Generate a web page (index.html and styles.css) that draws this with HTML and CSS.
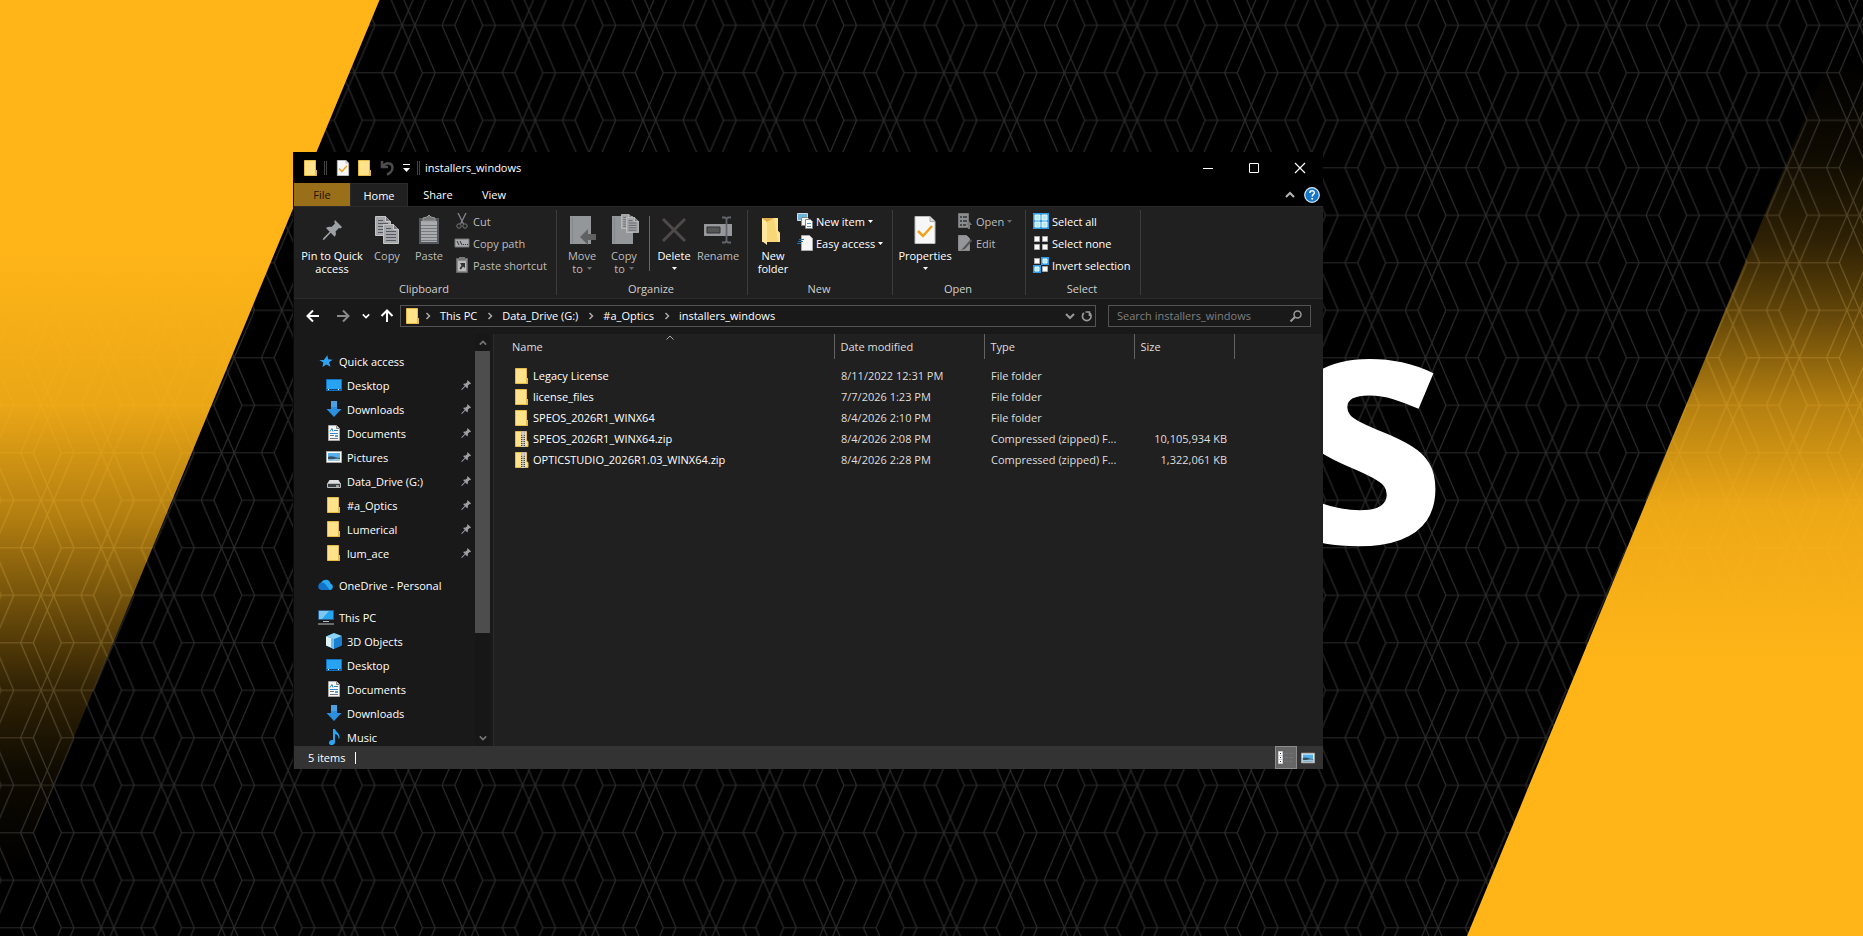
FILE: index.html
```
<!DOCTYPE html>
<html lang="en">
	<head>
		<meta charset="utf-8">
		<title>installers_windows</title>
		<link rel="stylesheet" href="styles.css">
	</head>
	<body>

		<!-- shared icons -->
		<svg class="defs" width="0" height="0" aria-hidden="true">
			<symbol id="folder" viewBox="0 0 16 16">
				<path d="M1.5 .5h11v9l1.5 1v5h-12.500z" fill="#ffe28a"/>
				<path d="M1.500 .5h11v9M1.500 .5v15h12v-5l-1-1v6" fill="none" stroke="#e8bb45"/>
			</symbol>
			<symbol id="zip" viewBox="0 0 16 16">
				<path d="M1.500 .5h11v9l1.500 1v5h-12.500z" fill="#ffe28a" stroke="#e8bb45"/>
				<path d="M7 0h4v16h-4z" fill="#c9c9c9"/>
				<path d="M9 4v12" stroke="#444" stroke-width="4" stroke-dasharray="1 1"/>
				<path d="M9 4v12" stroke="#ddd"/>
				<path d="M8 0h2v5h-2z" fill="#eee" stroke="#777" stroke-width=".5"/>
			</symbol>
			<symbol id="check-doc" viewBox="0 0 22 28">
				<path d="M1 .5h15l5 5v22h-20z" fill="#f7f7f7" stroke="#bbb"/>
				<path d="M16 .5v5h5" fill="#ddd" stroke="#aaa"/>
				<path d="M4 15l5 5 9-10" fill="none" stroke="#eea21b" stroke-width="2.500"/>
			</symbol>
			<symbol id="pin" viewBox="0 0 20 20">
				<path d="M13 0l7 7-1.500 1.500-1.500-.5-3.500 3.500c.8 2.200.3 4-.8 5.300l-4-4-6.200 6.700-1.800.5.500-1.800 6.500-6.500-3.700-3.700c1.500-1 3.500-1.500 5.500-1l3.500-3.500-.7-1.500z" fill="#9da1a6"/>
			</symbol>
			<symbol id="page" viewBox="0 0 16 20">
				<path d="M.5.5h10l5 5v14h-15z" fill="#a5a7aa" stroke="#c4c4c4"/>
				<path d="M10.500.5v5h5" fill="#777" stroke="#ccc"/>
				<path d="M3 4.500h5M3 7.500h10M3 10.500h10M3 13.500h10M3 16.500h10" stroke="#555a62"/>
			</symbol>
			<symbol id="chev-down" viewBox="0 0 10 10"><path d="M1 3l4 4 4-4" fill="none" stroke="currentColor" stroke-width="2"/></symbol>
			<symbol id="chev-up" viewBox="0 0 10 10"><path d="M1 7l4-4 4 4" fill="none" stroke="currentColor" stroke-width="2"/></symbol>
			<symbol id="chev-right" viewBox="0 0 10 10"><path d="M3.500 2l3 3-3 3" fill="none" stroke="currentColor" stroke-width="1.500"/></symbol>
			<symbol id="caret" viewBox="0 0 5 3"><path d="M0 0h5l-2.500 3z" fill="currentColor"/></symbol>
			<symbol id="arrow" viewBox="0 0 14 14"><path d="M13 7h-11M7 1.500l-5.500 5.500 5.500 5.500" fill="none" stroke="currentColor" stroke-width="2"/></symbol>
			<symbol id="desktop" viewBox="0 0 16 16"><path d="M.5 2.500h15v11h-15z" fill="#27a3f2" stroke="#1772bd"/><path d="M1 12.500h1m1 0h9m1 0h2" stroke="#0b4a80"/><path d="M2 12.500h1m9 0h1" stroke="#fff"/></symbol>
			<symbol id="download" viewBox="0 0 16 16"><path d="M5 0h6v8h4.500l-7.500 8-7.500-8h4.500z" fill="#2d8fe0"/><path d="M5 0h6v6h-6z" fill="#4da0e0"/></symbol>
			<symbol id="document" viewBox="0 0 16 16"><path d="M2.500.5h8l3 3v12h-11z" fill="#f7f7f7" stroke="#aaa"/><path d="M10.500.5v3h3" fill="#ccc" stroke="#888"/><path d="M4 6.500l2-3 1 3M8 5.500h4M4 8.500h8" fill="none" stroke="#2b86cf"/><path d="M4 10.500h4M4 13.500h8" stroke="#777"/><path d="M9 10h3v2h-3z" fill="#5c9bc0"/></symbol>
			<symbol id="picture" viewBox="0 0 16 16"><path d="M.5 2.500h15v11h-15z" fill="#fff" stroke="#a8a8a8"/><path d="M2 4h12v8h-12z" fill="#55b0ec"/><path d="M2 8c4-2 7 1 12 1v3h-12z" fill="#345267"/><path d="M2 10c5 1 7-1 12 0v2h-12z" fill="#9fc9de"/></symbol>
			<symbol id="drive" viewBox="0 0 16 16"><path d="M3.500 7h9l2.500 4h-14z" fill="#ddd"/><path d="M1.500 10.500h13v4h-13z" fill="#3a3f44" stroke="#bbb"/><path d="M10 13h3" stroke="#fff"/></symbol>
			<symbol id="star" viewBox="-1 -1 18 18"><path d="M9.500 1.500l1 4.500 5 .5-4 3 1.500 5-4.500-2.700-4.500 3 1-5-4.500-3h5z" fill="#2fa2f5"/></symbol>
			<symbol id="cloud" viewBox="0 0 16 16"><path d="M4 13a4 4 0 0 1-.8-7.500 5 5 0 0 1 9.300 1 3.400 3.400 0 0 1 0 6.500z" fill="#28a8f0"/><path d="M1 12c-1.500-2-1-6 3-6.500 3 0 4 3 8 7.500h-8z" fill="#1272c8"/></symbol>
			<symbol id="pc" viewBox="0 0 16 16"><path d="M.5 1.500h15v9h-15z" fill="#25a4f0" stroke="#2a5b86"/><path d="M1 2h10l-7 8h-3z" fill="#7cc8f2"/><path d="M5 12.500h6M0 15h16" stroke="#b9bdc1"/></symbol>
			<symbol id="cube" viewBox="0 0 16 16"><path d="M0 3.500l7-3 9 3v9l-8 3.500-8-3.500z" fill="#1a7fd0"/><path d="M0 3.500l8-3.500 8 3-8 3z" fill="#8ad4f5"/><path d="M0 3.500l8 2.500v10l-8-3.500z" fill="#dff3f2"/><path d="M5 5l3 1v10l-3-1.500z" fill="#68bff0"/></symbol>
			<symbol id="music" viewBox="0 0 16 16"><path d="M7 0h2c.5 3 5 4 4.500 9-.5 1-1 1-1 1 .5-3-1.500-4.500-3.500-5v8c0 4-6 4-6 1 0-2.500 2-3.500 4-3z" fill="#2aa5f3"/></symbol>
		</svg>

		<!-- wallpaper -->
		<svg class="wallpaper" viewBox="0 0 1863 936" preserveAspectRatio="xMidYMid slice" aria-hidden="true">
			<defs>
				<g id="lines" fill="none" stroke-width="1.200">
					<path d="M0 0l40.700 95M40.700 0l-40.700 95M12.700 0l40.700 95M53.400 0l-40.700 95M40.700 0h92M-80 0h92.700M40.700 95h92M-80 95h92.700"/>
					<path d="M60.200-47.500l40.700 95M100.900-47.500l-40.700 95M72.900-47.500l40.700 95M113.600-47.500l-40.700 95M60.200 47.500l40.700 95M100.900 47.500l-40.700 95M72.900 47.500l40.700 95M113.600 47.500l-40.700 95M-19.500 47.500h92.400M100.900 47.500h30"/>
				</g>
				<pattern id="mesh" x="442" y="25.300" width="120.400" height="95" patternUnits="userSpaceOnUse">
					<use href="#lines" stroke="#2b2b2b"/>
				</pattern>
				<pattern id="meshAmber" x="442" y="25.300" width="120.400" height="95" patternUnits="userSpaceOnUse">
					<use href="#lines" stroke="#e2a016"/>
				</pattern>
				<linearGradient id="fadeRight" gradientUnits="userSpaceOnUse" x1="0" y1="60" x2="0" y2="660">
					<stop offset="0" stop-color="#ffb518" stop-opacity="0"/>
					<stop offset=".16" stop-color="#ffb518" stop-opacity=".06"/>
					<stop offset=".3" stop-color="#ffb518" stop-opacity=".18"/>
					<stop offset=".42" stop-color="#ffb518" stop-opacity=".38"/>
					<stop offset=".57" stop-color="#ffb518" stop-opacity=".7"/>
					<stop offset=".75" stop-color="#ffb518" stop-opacity=".93"/>
					<stop offset="1" stop-color="#ffb518"/>
				</linearGradient>
				<linearGradient id="fadeLeft" gradientUnits="userSpaceOnUse" x1="0" y1="870" x2="0" y2="250">
					<stop offset="0" stop-color="#ffb518" stop-opacity="0"/>
					<stop offset=".16" stop-color="#ffb518" stop-opacity=".06"/>
					<stop offset=".3" stop-color="#ffb518" stop-opacity=".2"/>
					<stop offset=".42" stop-color="#ffb518" stop-opacity=".42"/>
					<stop offset=".57" stop-color="#ffb518" stop-opacity=".7"/>
					<stop offset=".75" stop-color="#ffb518" stop-opacity=".92"/>
					<stop offset="1" stop-color="#ffb518"/>
				</linearGradient>
				<mask id="bands" maskUnits="userSpaceOnUse" x="0" y="0" width="1863" height="936">
					<path d="M0 0h379.500l-388 936z" fill="url(#fadeLeft)"/>
					<path d="M1863-24v960h-396z" fill="url(#fadeRight)"/>
				</mask>
			</defs>
			<rect width="1863" height="936" fill="#000"/>
			<rect width="1863" height="936" fill="url(#mesh)"/>
			<path d="M0 0h379.500l-388 936z" fill="url(#fadeLeft)"/>
			<path d="M1863-24v960h-396z" fill="url(#fadeRight)"/>
			<path d="M0 450h300v486h-300zM1400 0h463v450h-463z" fill="url(#meshAmber)" opacity=".35" mask="url(#bands)"/>
			<text class="logo" x="1448" y="543" text-anchor="end">s</text>
		</svg>

		<div class="screen">
			<main class="window">

				<header class="titlebar">
					<svg class="i16"><use href="#folder"/></svg>
					<span class="grip"></span>
					<button class="quick" aria-label="Properties"><svg class="i16"><use href="#check-doc"/></svg></button>
					<button class="quick" aria-label="New folder"><svg class="i16"><use href="#folder"/></svg></button>
					<button class="quick" aria-label="Undo"><svg class="i16" viewBox="0 0 16 16"><path d="M3 1v6h6M3.500 6.500c4-5 10-3.500 10 1 0 3-2.500 6-5.500 7" fill="none" stroke="#4d4d4d" stroke-width="2.500"/></svg></button>
					<button class="more" aria-label="Customize"><svg width="7" height="8" viewBox="0 0 7 8"><path d="M0 .5h7" stroke="#fff"/><path d="M0 4h7l-3.500 4z" fill="#fff"/></svg></button>
					<span class="grip"></span>
					<h1>installers_windows</h1>
					<div class="controls">
						<button aria-label="Minimize"><svg width="12" height="12"><path d="M1 6.500h10" stroke="#fff"/></svg></button>
						<button aria-label="Maximize"><svg width="12" height="12"><path d="M1.500 1.500h9v9h-9z" fill="none" stroke="#fff"/></svg></button>
						<button aria-label="Close"><svg width="12" height="12"><path d="M1 1l10 10M11 1l-10 10" stroke="#fff" stroke-width="1.200"/></svg></button>
					</div>
				</header>

				<nav class="tabs">
					<button class="file">File</button>
					<button class="active">Home</button>
					<button class="share">Share</button>
					<button class="view">View</button>
					<div class="help">
						<button aria-label="Collapse ribbon"><svg class="i10"><use href="#chev-up"/></svg></button>
						<button aria-label="Help"><svg class="i16" viewBox="0 0 16 16"><circle cx="8" cy="8" r="7.300" fill="#1677c8" stroke="#dceaf5" stroke-width="1.200"/><path d="M5.800 6c0-3 4.600-2.800 4.600-.3 0 1.600-2.200 1.800-2.200 3.800" fill="none" stroke="#fff" stroke-width="1.500"/><circle cx="8.200" cy="11.800" r="1" fill="#fff"/></svg></button>
					</div>
				</nav>

				<section class="ribbon">
					<div class="group clipboard">
						<div class="items">
							<button class="big wide"><svg class="i32" viewBox="0 0 32 32"><use href="#pin" x="6" y="7" width="20" height="20"/></svg>Pin to Quick access</button>
							<button class="big off"><svg class="i32" viewBox="0 0 32 32"><use href="#page" x="4" y="3" width="16" height="20"/><use href="#page" x="12" y="11" width="16" height="20"/></svg>Copy</button>
							<button class="big off"><svg class="i32" viewBox="0 0 32 32"><path d="M6 5h20v26h-20z" fill="#55585c"/><path d="M8 8h16v21h-16z" fill="#a9abae"/><path d="M8 12.500h16M8 15.500h16M8 18.500h16M8 21.500h16M8 24.500h16M8 27.500h16" stroke="#777a7e"/><path d="M10 8v-3l4-1 2-2 2 2 4 1v3z" fill="#777" stroke="#999"/></svg>Paste</button>
							<div class="stack">
								<button class="off"><svg class="i16" viewBox="0 0 16 16"><path d="M4 0l5.500 11M12 0l-5.500 11" stroke="#84878b" stroke-width="1.300"/><circle cx="5" cy="13" r="2.200" fill="none" stroke="#777"/><circle cx="11" cy="13" r="2.200" fill="none" stroke="#777"/></svg>Cut</button>
								<button class="off"><svg class="i16" viewBox="0 0 16 16"><path d="M1 4h14v8h-14z" fill="#a9abae" stroke="#777"/><path d="M3 6l2 4M6 6l2 4M9 9.500h1M11 9.500h1M13 9.500h1" stroke="#333"/></svg>Copy path</button>
								<button class="off"><svg class="i16" viewBox="0 0 16 16"><path d="M2.500 1.500h11v14h-11z" fill="#888b8e" stroke="#666"/><path d="M4 4h8v10h-8z" fill="#bbb"/><path d="M5 0h6v3h-6z" fill="#777"/><path d="M6 6h5v5l-2-1.500-2 3-1.500-1 2-3z" fill="#333"/></svg>Paste shortcut</button>
							</div>
						</div>
						<h2>Clipboard</h2>
					</div>
					<div class="group organize">
						<div class="items">
							<button class="big off"><svg class="i32" viewBox="0 0 32 32"><path d="M4 3h21v28h-21z" fill="#94979a"/><path d="M6.500 4v26" stroke="#84878b"/><path d="M14 24l8-8v5h8v6h-8v5z" fill="#616161"/></svg><span>Move<br>to <svg class="caret"><use href="#caret"/></svg></span></button>
							<button class="big off"><svg class="i32" viewBox="0 0 32 32"><path d="M4 3h21v28h-21z" fill="#94979a"/><path d="M6.500 4v26" stroke="#84878b"/><use href="#page" x="13" y="1" width="12" height="15"/><use href="#page" x="18" y="4" width="13" height="16"/></svg><span>Copy<br>to <svg class="caret"><use href="#caret"/></svg></span></button>
							<span class="rule"></span>
							<button class="big mid"><svg class="i32" viewBox="0 0 32 32"><path d="M5 6l22 22M27 6l-22 22" stroke="#4e4a49" stroke-width="3"/></svg>Delete<svg class="caret"><use href="#caret"/></svg></button>
							<button class="big off mid"><svg class="i32" viewBox="0 0 32 32"><path d="M2 11h28v12h-28z" fill="#96989b"/><path d="M5 14h13v6h-13z" fill="#555" stroke="#333"/><path d="M20 4.500h3l1.500 1.500 1.500-1.500h3M24.500 6v22M20 29.500h3l1.500-1.500 1.500 1.500h3" fill="none" stroke="#62656a" stroke-width="1.800"/></svg>Rename</button>
						</div>
						<h2>Organize</h2>
					</div>
					<div class="group new">
						<div class="items">
							<button class="big"><svg class="i32" viewBox="0 0 32 32"><path d="M5 5h16v13l2 2v9h-18z" fill="#f8d778"/><path d="M5 5l5 4v23l-5-4z" fill="#ffe79c"/><path d="M10 9l7-4h-12z" fill="#e0ad49"/><path d="M17 5h4v13l2 2v9h-2z" fill="#ffe391"/></svg>New folder</button>
							<div class="stack">
								<button><svg class="i16" viewBox="0 0 16 16"><path d="M.5.500h10v7h-10z" fill="#6db5d8" stroke="#d2dde5"/><path d="M4.500 4.500h6l2 2v6h-8z" fill="#f4f4f4" stroke="#888"/><path d="M8.500 6.500h5l2 2v7h-7z" fill="#fff" stroke="#888"/><path d="M10 10.500h4M10 13.500h4" stroke="#579cc0"/></svg>New item<svg class="caret"><use href="#caret"/></svg></button>
								<button><svg class="i16" viewBox="0 0 16 16"><path d="M4.500.500h8l3 3v12h-11z" fill="#f7f7f7" stroke="#aaa"/><path d="M2 4.500h5M1 6.500h5M0 8.500h4" stroke="#2673b4"/></svg>Easy access<svg class="caret"><use href="#caret"/></svg></button>
							</div>
						</div>
						<h2>New</h2>
					</div>
					<div class="group open">
						<div class="items">
							<button class="big prop"><svg class="i32" viewBox="0 0 32 32"><use href="#check-doc" x="5" y="3" width="22" height="28"/></svg>Properties<svg class="caret"><use href="#caret"/></svg></button>
							<div class="stack">
								<button class="off"><svg class="i16" viewBox="0 0 16 16"><path d="M1.500.5h10v14h-10z" fill="#8b8d90" stroke="#777"/><path d="M3 4h2m1 0h4M3 8h2m1 0h4M3 12h2m1 0h3" stroke="#333" stroke-width="1.500"/><path d="M11 16v-4h-2l3-4 3 4h-2v4z" fill="#777"/></svg>Open<svg class="caret"><use href="#caret"/></svg></button>
								<button class="off"><svg class="i16" viewBox="0 0 16 16"><path d="M1.500.5h8l3 3v12h-11z" fill="#94969a" stroke="#888"/><path d="M14 4l-8 9-2 2 4-1 7-8z" fill="#555"/></svg>Edit</button>
							</div>
						</div>
						<h2>Open</h2>
					</div>
					<div class="group select">
						<div class="items">
							<div class="stack">
								<button><svg class="i16" viewBox="0 0 16 16"><path d="M0 0h16v16h-16z" fill="#2f9ce8"/><path d="M2 2h5v5h-5zM9 2h5v5h-5zM2 9h5v5h-5zM9 9h5v5h-5z" fill="#b9ece6" stroke="#e9f7fa"/></svg>Select all</button>
								<button><svg class="i16" viewBox="0 0 16 16"><path d="M1.500 1.500h5v5h-5zM9.500 1.500h5v5h-5zM1.500 9.500h5v5h-5zM9.500 9.500h5v5h-5z" fill="#fff" stroke="#aaa"/></svg>Select none</button>
								<button><svg class="i16" viewBox="0 0 16 16"><path d="M8 0h8v8h-8zM0 8h8v8h-8z" fill="#2f9ce8"/><path d="M10 2h4v4h-4zM2 10h4v4h-4z" fill="#b9ece6" stroke="#e9f7fa"/><path d="M1.500 1.500h5v5h-5zM9.500 9.500h5v5h-5z" fill="#fff" stroke="#aaa"/></svg>Invert selection</button>
							</div>
						</div>
						<h2>Select</h2>
					</div>
				</section>

				<section class="location">
					<button class="go" aria-label="Back"><svg class="i14"><use href="#arrow"/></svg></button>
					<button class="go dim" aria-label="Forward"><svg class="i14 flip"><use href="#arrow"/></svg></button>
					<button class="recent" aria-label="Recent locations"><svg class="i8"><use href="#chev-down"/></svg></button>
					<button class="up" aria-label="Up"><svg class="i14 turn"><use href="#arrow"/></svg></button>
					<div class="address">
						<svg class="i16"><use href="#folder"/></svg>
						<svg class="i10 sep"><use href="#chev-right"/></svg>
						<a href="#">This PC</a>
						<svg class="i10 sep"><use href="#chev-right"/></svg>
						<a href="#">Data_Drive (G:)</a>
						<svg class="i10 sep"><use href="#chev-right"/></svg>
						<a href="#">#a_Optics</a>
						<svg class="i10 sep"><use href="#chev-right"/></svg>
						<a href="#">installers_windows</a>
						<button class="history" aria-label="Previous locations"><svg class="i10"><use href="#chev-down"/></svg></button>
						<button class="reload" aria-label="Refresh"><svg width="12" height="12" viewBox="0 0 12 12"><path d="M3 2.500a4.300 4.300 0 1 0 5.500 0M4.500 1.500h4v4" transform="translate(0 .5)" fill="none" stroke="#999" stroke-width="1.700"/></svg></button>
					</div>
					<label class="search">
						<input type="text" placeholder="Search installers_windows" aria-label="Search installers_windows">
						<svg width="12" height="12" viewBox="0 0 12 12"><circle cx="7.500" cy="4.500" r="3.500" fill="none" stroke="#999" stroke-width="1.500"/><path d="M5 7l-4.500 4.500" stroke="#999" stroke-width="2"/></svg>
					</label>
				</section>

				<div class="panes">
					<aside class="tree">
						<ul>
							<li class="root star"><svg class="i16"><use href="#star"/></svg><a href="#">Quick access</a></li>
							<li><svg class="i16"><use href="#desktop"/></svg><a href="#">Desktop</a><svg class="i10"><use href="#pin"/></svg></li>
							<li><svg class="i16"><use href="#download"/></svg><a href="#">Downloads</a><svg class="i10"><use href="#pin"/></svg></li>
							<li><svg class="i16"><use href="#document"/></svg><a href="#">Documents</a><svg class="i10"><use href="#pin"/></svg></li>
							<li><svg class="i16"><use href="#picture"/></svg><a href="#">Pictures</a><svg class="i10"><use href="#pin"/></svg></li>
							<li><svg class="i16"><use href="#drive"/></svg><a href="#">Data_Drive (G:)</a><svg class="i10"><use href="#pin"/></svg></li>
							<li><svg class="i16"><use href="#folder"/></svg><a href="#">#a_Optics</a><svg class="i10"><use href="#pin"/></svg></li>
							<li><svg class="i16"><use href="#folder"/></svg><a href="#">Lumerical</a><svg class="i10"><use href="#pin"/></svg></li>
							<li><svg class="i16"><use href="#folder"/></svg><a href="#">lum_ace</a><svg class="i10"><use href="#pin"/></svg></li>
							<li class="root"><svg class="i16"><use href="#cloud"/></svg><a href="#">OneDrive - Personal</a></li>
							<li class="root"><svg class="i16"><use href="#pc"/></svg><a href="#">This PC</a></li>
							<li><svg class="i16"><use href="#cube"/></svg><a href="#">3D Objects</a></li>
							<li><svg class="i16"><use href="#desktop"/></svg><a href="#">Desktop</a></li>
							<li><svg class="i16"><use href="#document"/></svg><a href="#">Documents</a></li>
							<li><svg class="i16"><use href="#download"/></svg><a href="#">Downloads</a></li>
							<li class="last"><svg class="i16"><use href="#music"/></svg><a href="#">Music</a></li>
						</ul>
						<div class="scrollbar">
							<button aria-label="Scroll up"><svg class="i8"><use href="#chev-up"/></svg></button>
							<span class="thumb"></span>
							<button aria-label="Scroll down"><svg class="i8"><use href="#chev-down"/></svg></button>
						</div>
					</aside>

					<section class="files">
						<table>
							<colgroup>
								<col class="c-name">
								<col class="c-date">
								<col class="c-type">
								<col class="c-size">
							</colgroup>
							<thead>
								<tr>
									<th>Name<svg class="sort" viewBox="0 0 8 5"><path d="M.5 4.500l3.500-3.500 3.500 3.500" fill="none" stroke="#aaa"/></svg></th>
									<th>Date modified</th>
									<th>Type</th>
									<th>Size</th>
								</tr>
							</thead>
							<tbody>
								<tr><td><svg class="i16"><use href="#folder"/></svg>Legacy License</td><td>8/11/2022 12:31 PM</td><td>File folder</td><td></td></tr>
								<tr><td><svg class="i16"><use href="#folder"/></svg>license_files</td><td>7/7/2026 1:23 PM</td><td>File folder</td><td></td></tr>
								<tr><td><svg class="i16"><use href="#folder"/></svg>SPEOS_2026R1_WINX64</td><td>8/4/2026 2:10 PM</td><td>File folder</td><td></td></tr>
								<tr><td><svg class="i16"><use href="#zip"/></svg>SPEOS_2026R1_WINX64.zip</td><td>8/4/2026 2:08 PM</td><td>Compressed (zipped) F...</td><td>10,105,934 KB</td></tr>
								<tr><td><svg class="i16"><use href="#zip"/></svg>OPTICSTUDIO_2026R1.03_WINX64.zip</td><td>8/4/2026 2:28 PM</td><td>Compressed (zipped) F...</td><td>1,322,061 KB</td></tr>
							</tbody>
						</table>
					</section>
				</div>

				<footer class="status">
					<span>5 items</span>
					<span class="bar"></span>
					<div class="views">
						<button class="on" aria-label="Details"><svg width="16" height="14" viewBox="0 0 16 14"><path d="M.5.500h4v4h-4zM.5 4.500h4v4h-4zM.5 8.500h4v4h-4z" fill="#fff" stroke="#ccc"/><path d="M2 2.500h1M2 6.500h1M2 10.500h1" stroke="#234"/><path d="M6 2.500h4m1 0h4M6 6.500h4m1 0h4M6 10.500h4m1 0h4" stroke="#727272"/></svg></button>
						<button aria-label="Large icons"><svg class="i14"><use href="#picture"/></svg></button>
					</div>
				</footer>
			</main>
		</div>
	</body>
</html>
```
FILE: styles.css
```
* {
	box-sizing:border-box;
}
body {
	margin:0;
	background:#000;
	color:#fff;
	font-family:"Open Sans", "Noto Sans", sans-serif;
	font-size:11px;
	line-height:13px;
}
h1, h2, ul {
	margin:0;
	padding:0;
	font-size:11px;
	font-weight:normal;
	list-style:none;
}
button {
	display:flex;
	align-items:center;
	justify-content:center;
	margin:0;
	padding:0;
	border:0;
	background:none;
	color:inherit;
	font:inherit;
}
a {
	color:inherit;
	text-decoration:none;
}
svg {
	flex:none;
}
.defs {
	position:absolute;
}
.i8 { width:8px; height:8px; }
.i10 { width:10px; height:10px; }
.i14 { width:14px; height:14px; }
.i16 { width:16px; height:16px; }
.i32 { width:32px; height:32px; }
.caret {
	width:5px;
	height:3px;
}

/* wallpaper */
.wallpaper {
	position:fixed;
	inset:0;
	width:100%;
	height:100%;
}
.logo {
	fill:#fff;
	font-family:"Open Sans", sans-serif;
	font-size:331px;
	font-weight:bold;
}
.screen {
	position:relative;
	padding:152px 540px 160px 293px;
}
.window {
	border-left:1px solid #0a0a0a;
	background:#202020;
}

/* title bar */
.titlebar {
	display:flex;
	align-items:center;
	height:31px;
	padding-left:9px;
	background:#000;
}
.grip {
	width:3px;
	height:14px;
	border:1px solid #444;
	border-width:0 1px;
}
.titlebar > .i16 + .grip {
	margin:0 5px;
}
.quick {
	width:22px;
}
.more {
	width:16px;
	margin-right:3px;
}
.titlebar h1 {
	margin-left:5px;
}
.controls {
	display:flex;
	margin-left:auto;
}
.controls button {
	width:46px;
	height:31px;
}

/* tabs */
.tabs {
	display:flex;
	height:23px;
	background:#000;
}
.tabs .file {
	width:56px;
	background:#996f19;
	color:#1b1300;
}
.tabs .active {
	width:58px;
	border:1px solid #2b2b2b;
	border-bottom:0;
	background:#202020;
}
.share { width:60px; }
.view { width:52px; }
.help {
	display:flex;
	gap:9px;
	margin-left:auto;
	padding-right:3px;
	color:#b5b5b5;
}

/* ribbon */
.ribbon {
	display:flex;
	height:93px;
	padding-top:3px;
	border-top:1px solid #2b2b2b;
	border-bottom:1px solid #2b2b2b;
}
.group {
	display:flex;
	flex-direction:column;
	border-right:1px solid #3c3c3c;
	margin-bottom:3px;
}
.clipboard { width:263px; }
.organize { width:191px; }
.new { width:145px; }
.open { width:133px; }
.select { width:115px; }
.group h2 {
	padding-right:2px;
	color:#cfcfcf;
	text-align:center;
}
.items {
	display:flex;
	height:73px;
	padding-left:4px;
}
.big {
	flex-direction:column;
	justify-content:flex-start;
	width:42px;
	padding-top:3px;
}
.big .i32 {
	margin-bottom:4px;
}
.big > .caret {
	margin-top:5px;
}
.big span .caret {
	margin:0 0 3px 1px;
}
.wide { width:68px; }
.mid { width:44px; }
.off {
	color:#bdbdbd;
}
.off .caret {
	color:#6c6c6c;
}
.rule {
	width:1px;
	height:55px;
	margin:6px 2px 0 4px;
	background:#666;
}
.stack {
	padding:0 0 0 4px;
}
.stack button {
	justify-content:flex-start;
	gap:3px;
	height:22px;
	white-space:nowrap;
}
.new .stack { padding-left:3px; }
.open .prop { width:56px; }
.select .items { padding-left:3px; }

/* address row */
.location {
	display:flex;
	align-items:center;
	height:35px;
	padding:0 12px 2px 0;
	background:#191919;
}
.go {
	width:32px;
	padding-left:6px;
}
.go + .go {
	width:28px;
}
.dim {
	color:#8b8b8b;
}
.flip { transform:rotate(180deg); }
.turn { transform:rotate(90deg); }
.recent {
	width:24px;
}
.up {
	width:18px;
}
.address {
	display:flex;
	flex:1;
	align-items:center;
	height:22px;
	margin-left:4px;
	padding-left:4px;
	border:1px solid #535353;
}
.sep {
	margin:0 7px 0 8px;
	color:#aaa;
}
.address .i16 + .sep {
	margin-left:2px;
}
.history {
	width:16px;
	height:20px;
	margin-left:auto;
	color:#999;
}
.reload {
	width:17px;
}
.search {
	display:flex;
	align-items:center;
	width:203px;
	height:22px;
	margin-left:12px;
	padding:0 8px;
	border:1px solid #535353;
}
.search input {
	flex:1;
	min-width:0;
	padding:0;
	border:0;
	outline:0;
	background:none;
	color:#fff;
	font:inherit;
}
.search input::placeholder {
	color:#7f7f7f;
}

/* tree and files */
.panes {
	display:flex;
}
.tree {
	display:flex;
	width:200px;
	border-right:1px solid #2b2b2b;
	background:#191919;
}
.tree ul {
	flex:1;
	padding:15px 4px 0 0;
}
.tree li {
	display:flex;
	align-items:center;
	gap:5px;
	height:24px;
	padding-left:32px;
}
.tree .root {
	margin-top:8px;
	padding-left:24px;
}
.tree .star {
	margin-top:0;
}
.tree .last {
	height:21px;
	padding-top:3px;
	overflow:hidden;
}
.tree .i10 {
	margin-left:auto;
}
.scrollbar {
	display:flex;
	flex-direction:column;
	width:15px;
	margin-right:3px;
	background:#171717;
	color:#777;
}
.scrollbar button {
	height:17px;
}
.thumb {
	height:282px;
	margin-bottom:auto;
	background:#4d4d4d;
}
.files {
	flex:1;
}
table {
	width:740px;
	table-layout:fixed;
	border-collapse:collapse;
}
.c-name { width:340px; }
.c-date, .c-type { width:150px; }
.c-size { width:100px; }
th {
	height:25px;
	padding:0 6px;
	border-right:1px solid #636363;
	color:#dedede;
	font-weight:normal;
	text-align:left;
}
thead::after {
	content:"";
	display:block;
	height:7px;
}
th:first-child {
	position:relative;
	padding-left:18px;
}
.sort {
	position:absolute;
	top:1px;
	left:172px;
	width:8px;
	height:5px;
}
td {
	height:21px;
	padding:0 7px 2px;
	color:#dedede;
	white-space:nowrap;
}
td:first-child {
	padding-left:20px;
	color:#fff;
}
td .i16 {
	margin-right:3px;
	vertical-align:-4px;
}
td:last-child {
	text-align:right;
}

/* status bar */
.status {
	display:flex;
	align-items:center;
	height:23px;
	padding-left:14px;
	background:#333;
}
.bar {
	width:1px;
	height:12px;
	margin-left:10px;
	background:#fff;
}
.views {
	display:flex;
	margin-left:auto;
	padding-right:4px;
}
.views button {
	width:22px;
	height:23px;
}
.views .on {
	border:1px solid #8b8b8b;
	background:#666;
}
```
